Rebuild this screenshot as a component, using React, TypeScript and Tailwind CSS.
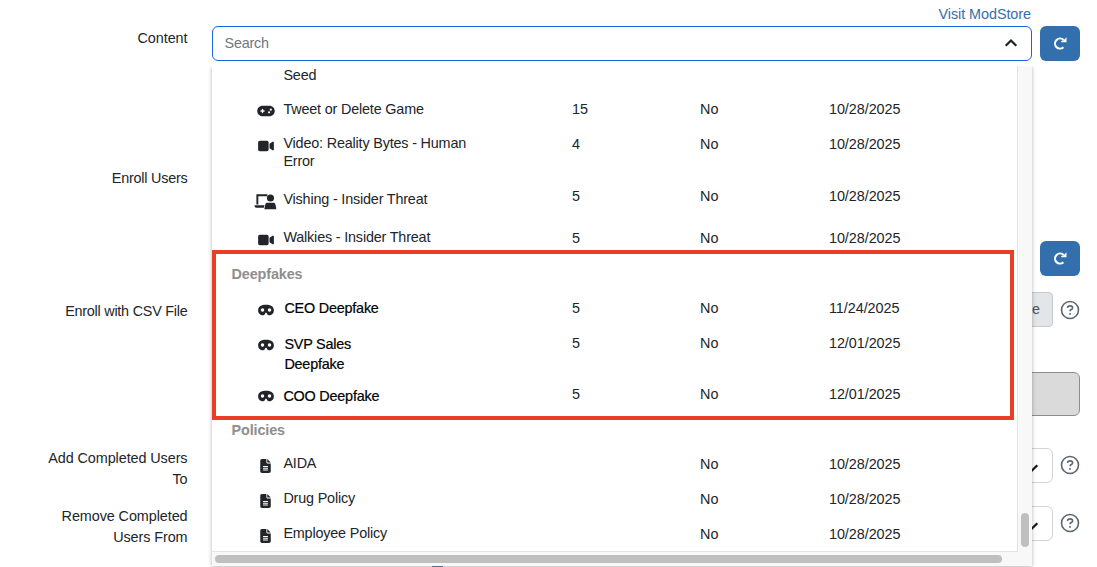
import type { ReactNode } from 'react';
import { FaFileLines, FaGamepad, FaMask, FaVideo } from 'react-icons/fa6';

interface ContentItem {
  name: string;
  icon?: ReactNode;
  duration?: string;
  mobile?: string;
  published?: string;
  rowClass?: string;
  nameClass?: string;
  iconClass?: string;
  valueClass?: string;
}

const VishingIcon = () => (
  <svg viewBox="0 0 24 17" className="ml-px h-[17px] w-6" fill="currentColor">
    <path d="M2.500 1H14v2H4.500v8.500h-2z" />
    <path d="M.5 12.500H11l-.8 2.500H2.500a2 2 0 0 1-2-2z" />
    <circle cx="17.200" cy="4.900" r="3.700" />
    <path d="M14 9.800h6.200c1.300 0 2 .7 2.200 1.800l.9 5H10.800l1-5c.2-1.100.9-1.800 2.200-1.800z" />
  </svg>
);

const Chevron = ({ className }: { className: string }) => (
  <svg viewBox="0 0 14 14" className={className} fill="none" stroke="currentColor" strokeWidth="2.300">
    <path d="M1.700 4.300 7 9.500l5.300-5.200" />
  </svg>
);

const RefreshIcon = () => (
  <svg viewBox="0 0 14 14" className="mb-px h-[14px] w-[14px]" fill="none" stroke="currentColor">
    <path d="M10.600 4A5 5 0 1 0 10.400 11.200" strokeWidth="2.100" />
    <path d="M13.500 1.300v4.900H8.300V4.900l2.400-.6z" fill="currentColor" stroke="none" />
  </svg>
);

const gamepad = <FaGamepad className="ml-px h-[14px] w-[18px]" />;
const video = <FaVideo className="ml-px h-[14px] w-4" />;
const mask = <FaMask className="ml-px h-[14px] w-4" />;
const file = <FaFileLines className="h-[14px] w-[11px]" />;

const trainings: ContentItem[] = [
  { name: 'Seed', rowClass: 'h-[26px]', nameClass: 'pt-0' },
  { name: 'Tweet or Delete Game', icon: gamepad, duration: '15', mobile: 'No', published: '10/28/2025', nameClass: 'pt-2' },
  { name: 'Video: Reality Bytes - Human Error', icon: video, duration: '4', mobile: 'No', published: '10/28/2025', rowClass: 'h-[52px]' },
  { name: 'Vishing - Insider Threat', icon: <VishingIcon />, duration: '5', mobile: 'No', published: '10/28/2025', rowClass: 'h-[42px]', nameClass: 'pt-[11px]', iconClass: 'pt-[14px]' },
  { name: 'Walkies - Insider Threat', icon: video, duration: '5', mobile: 'No', published: '10/28/2025' },
];

const deepfakes: ContentItem[] = [
  { name: 'CEO Deepfake', icon: mask, duration: '5', mobile: 'No', published: '11/24/2025', nameClass: 'pt-2 pl-px' },
  { name: 'SVP Sales Deepfake', icon: mask, duration: '5', mobile: 'No', published: '12/01/2025', rowClass: 'h-[52px]', nameClass: 'w-24 pt-2 pl-px leading-5' },
  { name: 'COO Deepfake', icon: mask, duration: '5', mobile: 'No', published: '12/01/2025', nameClass: 'pt-[9px]', iconClass: 'pt-[11px]', valueClass: 'pt-[7px]' },
];

const policies: ContentItem[] = [
  { name: 'AIDA', icon: file, mobile: 'No', published: '10/28/2025' },
  { name: 'Drug Policy', icon: file, mobile: 'No', published: '10/28/2025' },
  { name: 'Employee Policy', icon: file, mobile: 'No', published: '10/28/2025' },
];

const Row = ({ item, strong }: { item: ContentItem; strong?: boolean }) => {
  const value = item.valueClass ?? 'pt-2';
  return (
    <div className={`flex shrink-0 items-start pl-[41px] leading-[18px] ${item.rowClass ?? 'h-[35px]'}`}>
      <div className={`flex w-[30.4px] justify-start ${item.iconClass ?? 'pt-3'}`}>
        <span className="flex w-6 justify-center">{item.icon}</span>
      </div>
      <div className="w-[288.600px]">
        <div
          className={`${item.nameClass ?? 'pt-[7px]'} ${
            strong ? 'tracking-[-0.21px] text-black [-webkit-text-stroke:0.2px_black]' : 'w-[195px] tracking-[-0.18px]'
          }`}
        >
          {item.name}
        </div>
      </div>
      <div className={`w-32 ${value}`}>{item.duration}</div>
      <div className={`w-[129px] ${value}`}>{item.mobile}</div>
      <div className={`tracking-[-0.06px] ${value}`}>{item.published}</div>
    </div>
  );
};

const GroupTitle = ({ children, className }: { children: ReactNode; className: string }) => (
  <div className={`shrink-0 pl-[19.500px] font-bold leading-[18px] tracking-[-0.12px] text-[#8e8e8e] ${className}`}>{children}</div>
);

const Dropdown = () => (
  <div className="absolute left-[212px] top-[66px] z-10 flex h-[500px] w-[820px] flex-col bg-[#f8f8f8] shadow-[0_1px_4px_rgba(0,0,0,0.3)] [clip-path:inset(0_-6px_-6px_-6px)]">
    <div className="flex h-[485px] shrink-0">
      <div className="flex w-[805px] flex-col overflow-hidden bg-white">
        {trainings.map((item) => (
          <Row key={item.name} item={item} />
        ))}
        <GroupTitle className="h-[35px] pt-[9px]">Deepfakes</GroupTitle>
        {deepfakes.map((item) => (
          <Row key={item.name} item={item} strong />
        ))}
        <GroupTitle className="h-[34px] pt-2">Policies</GroupTitle>
        {policies.map((item) => (
          <Row key={item.name} item={item} />
        ))}
      </div>
      <div className="flex flex-1 items-end justify-center border-l border-[#e3e3e3] pb-1">
        <div className="h-[34px] w-2 rounded-full bg-[#bfbfbf]" />
      </div>
    </div>
    <div className="flex h-[15px] w-[806px] items-center border-t border-[#e3e3e3] pl-[3px]">
      <div className="h-2 w-[787px] rounded-full bg-[#bfbfbf]" />
    </div>
    <div className="absolute left-0 top-[184px] h-[170px] w-[802px] border-4 border-[#e93d25]" />
  </div>
);

const Label = ({ children, className }: { children: ReactNode; className: string }) => (
  <div className={`w-[187.500px] shrink-0 pl-10 text-right leading-[21px] ${className}`}>{children}</div>
);

const RefreshButton = () => (
  <button type="button" className="flex h-[35px] w-10 items-center justify-center rounded-md bg-[#326fac] text-white">
    <RefreshIcon />
  </button>
);

const Help = () => (
  <svg viewBox="0 0 20 20" className="ml-[7px] h-5 w-5" fill="none" stroke="#5c666f" strokeWidth="1.600">
    <circle cx="10" cy="10" r="8.500" />
    <path d="M7.500 7.900C7.700 6.300 8.600 5.900 10 5.900c1.500 0 2.600.8 2.600 2 0 1.700-2.600 1.600-2.600 3.300" />
    <path d="M10 13v1.700" />
  </svg>
);

const SelectRow = ({ label, className }: { label: string; className: string }) => (
  <div className={`flex ${className}`}>
    <Label className="tracking-[-0.08px]">{label}</Label>
    <div className="ml-[24.500px] flex h-[35px] w-[841px] items-center justify-end rounded-md border border-[#d0d3d7] pr-[13px] pt-1 text-[#16191c]">
      <Chevron className="h-[14px] w-[14px]" />
    </div>
    <div className="flex h-[34px] items-center">
      <Help />
    </div>
  </div>
);

const App = () => (
  <main className="relative h-[567px] w-[1097px] overflow-hidden bg-white font-['Liberation_Sans',Arial,sans-serif] text-[14.4px] text-[#212529]">
    <div className="flex h-[26px] w-[1031px] justify-end pt-[5px] leading-[18px] tracking-[-0.06px] text-[#326fac]">
      <a href="#modstore">Visit ModStore</a>
    </div>
    <div className="flex h-[140px]">
      <Label className="pt-[2px] tracking-[-0.05px]">Content</Label>
      <div className="ml-[24.500px] flex h-[35px] w-[820px] items-center justify-between rounded-md border border-[#1c64dc] pl-[11.500px] pr-[13px]">
        <span className="tracking-[-0.2px] text-[#6f7780]">Search</span>
        <Chevron className="mb-px h-[14px] w-[14px] rotate-180" />
      </div>
      <div className="ml-2">
        <RefreshButton />
      </div>
    </div>
    <div className="flex h-[126px]">
      <Label className="pt-[2px] tracking-[-0.22px]">Enroll Users</Label>
      <div className="ml-[852.500px] pt-[75px]">
        <RefreshButton />
      </div>
    </div>
    <div className="flex h-20">
      <Label className="pt-[9px] tracking-[-0.24px]">Enroll with CSV File</Label>
      <div className="ml-[24.500px] flex h-[35px] w-[841px] items-center justify-end rounded-[4px] border border-[#c5cbd3] bg-[#e2e6e9] pr-3 text-[#4d5358]">
        Browse
      </div>
      <div className="flex h-[35px] items-center">
        <Help />
      </div>
    </div>
    <div className="flex h-[76px] pl-[212px]">
      <div className="h-11 w-[868px] rounded-md border border-[#8d8d8d] bg-[#dadada]" />
    </div>
    <SelectRow label="Add Completed Users To" className="h-[58px]" />
    <SelectRow label="Remove Completed Users From" className="h-[60px]" />
    <Dropdown />
    <div className="absolute left-[432px] top-[566px] z-20 h-px w-[11px] bg-[#52708f]" />
  </main>
);

export default App;
